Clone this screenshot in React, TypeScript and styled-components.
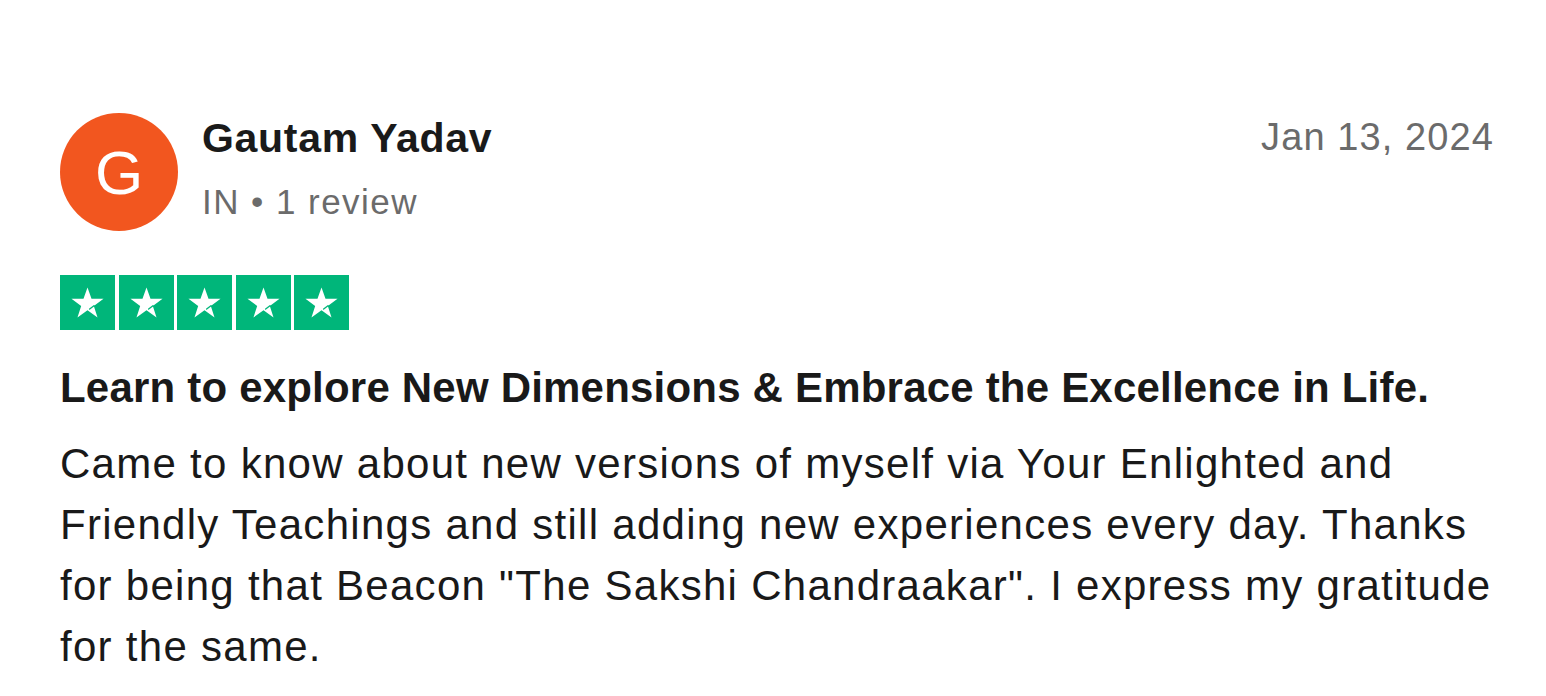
import styled, { createGlobalStyle } from "styled-components";

const GlobalStyle = createGlobalStyle`
    body {
        margin: 0;
        background: #ffffff;
        font-family: "Liberation Sans", Arial, sans-serif;
        color: #191919;
    }
`;

const Card = styled.article`
    width: 1546px;
    height: 696px;
    box-sizing: border-box;
    padding: 113px 52px 0 60px;
    overflow: hidden;
`;

const Header = styled.header`
    display: flex;
    align-items: flex-start;
`;

const Avatar = styled.div`
    width: 118px;
    height: 118px;
    border-radius: 50%;
    background: #f2561f;
    color: #ffffff;
    display: flex;
    align-items: center;
    justify-content: center;
    font-size: 62px;
    flex-shrink: 0;
`;

const Consumer = styled.div`
    margin-left: 24px;
    flex: 1;
    padding-top: 3px;
`;

const Name = styled.div`
    font-size: 41px;
    font-weight: 700;
    line-height: 44px;
    letter-spacing: 0.7px;
    color: #1a1a1a;
`;

const Meta = styled.div`
    font-size: 35px;
    line-height: 44px;
    letter-spacing: 1.45px;
    margin-top: 20px;
    color: #6b6b6b;
`;

const DateText = styled.time`
    font-size: 38px;
    line-height: 44px;
    letter-spacing: 1.1px;
    padding-top: 2px;
    color: #6b6b6b;
`;

const Stars = styled.div`
    display: flex;
    gap: 3.5px;
    margin-top: 44px;
`;

const StarBox = styled.div`
    width: 55px;
    height: 55px;
    background: #00b67a;
    display: flex;
    align-items: center;
    justify-content: center;
`;

const Title = styled.h2`
    margin: 32px 0 0;
    font-size: 42px;
    font-weight: 700;
    line-height: 52px;
    letter-spacing: 0.2px;
    color: #191919;
`;

const Body = styled.p`
    margin: 19px 0 0;
    max-width: 1445px;
    font-size: 42px;
    line-height: 61px;
    letter-spacing: 1.28px;
    color: #191919;
`;

function Star() {
    return (
        <svg width="37" height="37" viewBox="0 0 24 24">
            <path
                d="M12 2.2l2.6 7.4h7.8l-6.3 4.6 2.4 7.5L12 17.1l-6.5 4.6 2.4-7.5-6.3-4.6h7.8z"
                fill="#ffffff"
            />
            <path
                d="M16.2 14.1L13.4 16.2"
                stroke="#00b67a"
                strokeWidth="0.9"
                strokeLinecap="round"
            />
        </svg>
    );
}

export default function App() {
    return (
        <>
            <GlobalStyle />
            <Card>
                <Header>
                    <Avatar>G</Avatar>
                    <Consumer>
                        <Name>Gautam Yadav</Name>
                        <Meta>IN • 1 review</Meta>
                    </Consumer>
                    <DateText>Jan 13, 2024</DateText>
                </Header>
                <Stars>
                    {[0, 1, 2, 3, 4].map((i) => (
                        <StarBox key={i}>
                            <Star />
                        </StarBox>
                    ))}
                </Stars>
                <Title>
                    Learn to explore New Dimensions &amp; Embrace the
                    Excellence in Life.
                </Title>
                <Body>
                    Came to know about new versions of myself via Your
                    Enlighted and Friendly Teachings and still adding new
                    experiences every day. Thanks for being that Beacon "The
                    Sakshi Chandraakar". I express my gratitude for the same.
                </Body>
            </Card>
        </>
    );
}
